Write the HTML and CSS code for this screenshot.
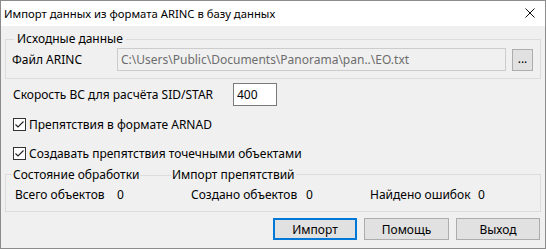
FILE: index.html
```html
<!DOCTYPE html>
<html lang="ru">
<head>
  <meta charset="UTF-8">
  <meta name="viewport" content="width=device-width, initial-scale=1.0">
  <title>Импорт данных из формата ARINC в базу данных</title>
  <link rel="stylesheet" href="styles.css">
</head>
<body>
  <div class="window">
    <div class="titlebar">
      <span class="title">Импорт данных из формата ARINC в базу данных</span>
      <svg class="close" width="10" height="10" viewBox="0 0 10 10">
        <path d="M0.5 0.5 L9.5 9.5 M9.5 0.5 L0.5 9.5" stroke="#111" stroke-width="1" fill="none"/>
      </svg>
    </div>

    <div class="content">
      <fieldset class="group source">
        <legend class="source-legend">Исходные данные</legend>
        <div class="file-row">
          <label class="file-label" for="filePath">Файл ARINC</label>
          <input class="file-path" id="filePath" type="text" value="C:\Users\Public\Documents\Panorama\pan..\EO.txt" disabled>
          <button class="browse" type="button">...</button>
        </div>
      </fieldset>

      <div class="speed-row">
        <label class="speed-label" for="speed">Скорость ВС для расчёта SID/STAR</label>
        <input class="speed" id="speed" type="text" value="400">
      </div>

      <label class="check check-first">
        <svg class="box" width="13" height="13" viewBox="0 0 13 13">
          <rect x="0.5" y="0.5" width="12" height="12" fill="#fff" stroke="#333"/>
          <path d="M2.5 6.5 L5 9 L10.5 3.5" stroke="#222" stroke-width="1.1" fill="none"/>
        </svg>
        Препятствия в формате ARNAD
      </label>

      <label class="check check-second">
        <svg class="box" width="13" height="13" viewBox="0 0 13 13">
          <rect x="0.5" y="0.5" width="12" height="12" fill="#fff" stroke="#333"/>
          <path d="M2.5 6.5 L5 9 L10.5 3.5" stroke="#222" stroke-width="1.1" fill="none"/>
        </svg>
        Создавать препятствия точечными объектами
      </label>

      <fieldset class="group status">
        <legend class="status-legend">
          <span class="legend-first">Состояние обработки</span>
          <span class="legend-line"></span>
          <span class="legend-second">Импорт препятствий</span>
        </legend>
        <div class="stats">
          <span>Всего объектов</span>
          <span>0</span>
          <span>Создано объектов</span>
          <span>0</span>
          <span>Найдено ошибок</span>
          <span>0</span>
        </div>
      </fieldset>

      <div class="buttons">
        <button class="btn btn-default btn-import" type="button">Импорт</button>
        <button class="btn btn-help" type="button">Помощь</button>
        <button class="btn btn-exit" type="button">Выход</button>
      </div>
    </div>
  </div>
</body>
</html>
```

FILE: styles.css
```css
/* Reset */
* {
  margin: 0;
  padding: 0;
  box-sizing: border-box;
}

body {
  font-family: 'Noto Sans', 'Liberation Sans', sans-serif;
  font-size: 12px;
  color: #000;
  background: #fff;
}

.window {
  width: 546px;
  height: 249px;
  border: 1px solid #8c8c8c;
  background: #f0f0f0;
  overflow: hidden;
}

/* Title bar */
.titlebar {
  height: 25px;
  background: #fff;
  display: flex;
  align-items: center;
  justify-content: space-between;
  padding: 0 10px 0 3px;
}

.title {
  font-size: 11.3px;
  line-height: 16px;
}

.close {
  display: block;
  margin-top: -1px;
}

/* Dialog body */
.content {
  padding: 5px 4px 0 4px;
}

.group {
  border: 1px solid #dcdcdc;
  min-width: 0;
}

legend {
  height: 17px;
  line-height: 15px;
}

.source {
  padding: 0 6px 7px 6px;
}

.source-legend {
  padding: 0 3px;
  margin-left: 2px;
}

.file-row {
  display: flex;
  align-items: flex-start;
}

.file-label {
  width: 105px;
  line-height: 23px;
}

.file-path {
  width: 389px;
  height: 23px;
  border: 1px solid #cccccc;
  background: #f0f0f0;
  color: #6d6d6d;
  -webkit-text-fill-color: #6d6d6d;
  font: inherit;
  padding: 0 3px;
  opacity: 1;
}

.browse {
  width: 21px;
  height: 22px;
  margin: 1px 0 0 6px;
  border: 1px solid #adadad;
  background: #e1e1e1;
  font: inherit;
  line-height: 14px;
  padding-bottom: 2px;
}

.speed-row {
  display: flex;
  align-items: center;
  margin: 4px 0 0 8px;
}

.speed-label {
  width: 220px;
}

.speed {
  width: 44px;
  height: 23px;
  border: 1px solid #7a7a7a;
  background: #fff;
  font: inherit;
  padding: 0 3px;
  outline: none;
}

.check {
  display: flex;
  align-items: center;
  height: 17px;
  margin-left: 8px;
  gap: 3px;
}

.check-first {
  margin-top: 10px;
}

.check-second {
  margin-top: 12px;
}

.box {
  display: block;
  flex: none;
}

.status {
  margin-top: 4px;
  padding: 4px 6px 8px 9px;
}

.status-legend {
  display: flex;
  align-items: center;
  margin-left: -3px;
  padding: 0 1px;
}

.legend-first {
  width: 127px;
}

.legend-line {
  width: 31px;
  height: 1px;
  background: #dcdcdc;
  margin-right: 1px;
  margin-top: 2px;
}

.stats {
  display: grid;
  grid-template-columns: 102px 74px 115px 64px 108px auto;
  line-height: 16px;
}

/* Bottom buttons */
.buttons {
  display: flex;
  justify-content: flex-end;
  gap: 7px;
  margin-top: 6px;
  padding-right: 1px;
}

.btn {
  height: 22px;
  border: 1px solid #adadad;
  background: #e1e1e1;
  font: inherit;
  color: #000;
}

.btn-default {
  border: 2px solid #0078d7;
}

.btn-import {
  width: 84px;
}

.btn-help {
  width: 85px;
}

.btn-exit {
  width: 84px;
}
```
